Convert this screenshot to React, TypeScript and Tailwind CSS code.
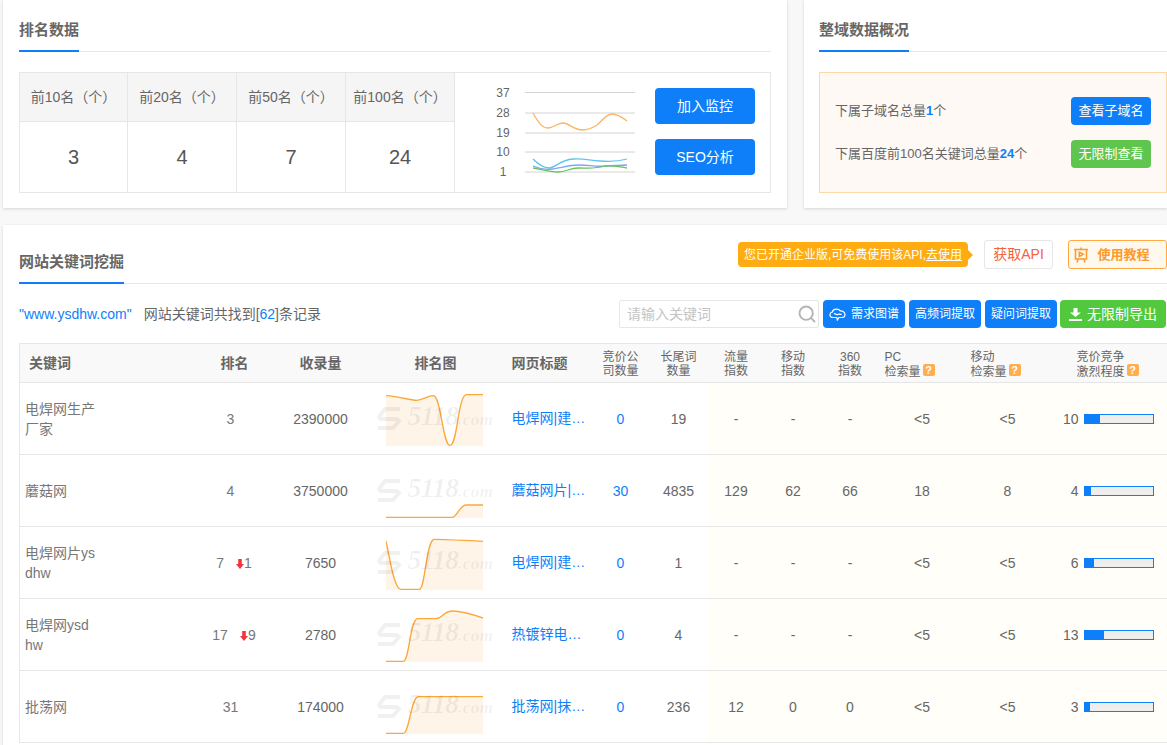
import { Search } from 'lucide-react';

const font = "font-['Liberation_Sans','Noto_Sans_CJK_SC',sans-serif]";

const rows = [
  {
    kw: '电焊网生产厂家',
    rank: '3',
    drop: '',
    count: '2390000',
    title: '电焊网|建…',
    bid: '0',
    tail: '19',
    flow: '-',
    mobile: '-',
    s360: '-',
    pc: '<5',
    mob: '<5',
    level: 10,
    fill: 15,
    line: 'M0 20 C40 22 70 34 92 34 C110 34 125 20 142 20 C165 20 170 169 192 169 C215 169 215 17 242 17 L291 17',
  },
  {
    kw: '蘑菇网',
    rank: '4',
    drop: '',
    count: '3750000',
    title: '蘑菇网片|…',
    bid: '30',
    tail: '4835',
    flow: '129',
    mobile: '62',
    s360: '66',
    pc: '18',
    mob: '8',
    level: 4,
    fill: 6,
    line: 'M0 169 L200 169 C215 165 222 132 240 132 L291 132',
  },
  {
    kw: '电焊网片ysdhw',
    rank: '7',
    drop: '1',
    count: '7650',
    title: '电焊网|建…',
    bid: '0',
    tail: '1',
    flow: '-',
    mobile: '-',
    s360: '-',
    pc: '<5',
    mob: '<5',
    level: 6,
    fill: 9,
    line: 'M0 24 C12 80 25 169 45 169 L100 169 C118 169 120 19 145 19 C180 19 240 23 291 25',
  },
  {
    kw: '电焊网ysdhw',
    rank: '17',
    drop: '9',
    count: '2780',
    title: '热镀锌电…',
    bid: '0',
    tail: '4',
    flow: '-',
    mobile: '-',
    s360: '-',
    pc: '<5',
    mob: '<5',
    level: 13,
    fill: 19,
    line: 'M0 169 L52 169 C70 169 72 41 95 41 L150 41 C170 41 172 18 200 18 C230 18 265 30 291 39',
  },
  {
    kw: '批荡网',
    rank: '31',
    drop: '',
    count: '174000',
    title: '批荡网|抹…',
    bid: '0',
    tail: '236',
    flow: '12',
    mobile: '0',
    s360: '0',
    pc: '<5',
    mob: '<5',
    level: 3,
    fill: 5,
    line: 'M0 169 L52 169 C70 169 75 59 97 59 L291 59',
  },
];

function Title({ children }: { children: string }) {
  return (
    <span className="-mb-px block border-b-2 border-[#0e7ff8] pb-[10px] text-[15px] leading-5 font-bold text-[#666]">
      {children}
    </span>
  );
}

function Badge() {
  return (
    <span className="ml-[2px] inline-block h-3 w-3 rounded-[2px] bg-[#ffad4f] text-center align-[2px] text-[11px] leading-3 font-bold text-white">
      ?
    </span>
  );
}

// ranking sparkline with the grey watermark over it
function RankChart({ line }: { line: string }) {
  return (
    <div className="relative mx-auto h-[60px] w-[126px]">
      <svg className="absolute top-0 left-[13px]" width="97" height="60" viewBox="0 0 291 180" fill="none">
        <path d={`${line} L291 171 L0 171 Z`} fill="#fef4e8" stroke="none" />
        <path d={line} stroke="#fda73a" strokeWidth="4" />
      </svg>
      <div className="absolute top-[17px] left-[4px] flex items-center text-[rgba(0,0,0,0.06)]">
        <svg width="25" height="25" viewBox="0 0 25 25" fill="none" stroke="currentColor" strokeWidth="4" strokeLinejoin="round">
          <path d="M23 3 H8 L2 11 L4 13 H20 L22 15 L16 22 H1" />
        </svg>
        <span className="-mt-[4px] ml-[6px] font-['Liberation_Serif',serif] text-[28px] leading-none font-bold tracking-[-1px] italic">5118</span>
        <span className="mt-[2px] font-['Liberation_Serif',serif] text-[17px] leading-none font-bold tracking-[0.5px] italic">.com</span>
      </div>
    </div>
  );
}

function Overview() {
  const ys = [92.5, 113, 133, 152, 172];
  const labels = ['37', '28', '19', '10', '1'];
  return (
    <svg width="160" height="100" viewBox="490 80 160 100" fill="none" className={`-mt-[5px] ${font}`}>
      {ys.map((y, i) => (
        <g key={y}>
          <line x1="525" x2="635" y1={y} y2={y} stroke="#d4d4d4" />
          <text x="503" y={y + 4} textAnchor="middle" fontSize="12" fill="#666" stroke="none">
            {labels[i]}
          </text>
        </g>
      ))}
      <path d="M533 113 C538 122 542 128 548 128 C553 128 558 123 563 123 C569 123 574 130 582 130 C590 130 594 127 597 125 C602 121 606 114 612 114 C618 114 623 118 627 121" stroke="#fdb462" strokeWidth="1.3" />
      <path d="M533 159 C538 164 543 168 549 168 C555 168 560 160 573 159 C585 158 590 161 600 161 C612 162 620 161 627 159" stroke="#5ec5ea" strokeWidth="1.3" />
      <path d="M533 166 C540 169 545 170 552 169 C560 168 570 165 578 165 C590 165 595 167 605 166 C615 165 620 166 627 165" stroke="#7ea6ee" strokeWidth="1.3" />
      <path d="M533 168 C540 169 550 172 558 172 C566 172 570 168 578 168 C590 168 595 169 605 166 C612 165 620 167 627 168" stroke="#68c45c" strokeWidth="1.3" />
    </svg>
  );
}

function ActionButton({ className, children }: { className: string; children: React.ReactNode }) {
  return (
    <button className={`flex h-7 items-center justify-center rounded-[4px] text-white ${className}`}>
      {children}
    </button>
  );
}

export default function App() {
  return (
    <div className={`h-[745px] w-[1167px] overflow-hidden bg-[#f8f8f8] pl-[3px] ${font}`}>
      <div className="flex gap-[17px]">
        {/* 排名数据 */}
        <section className="h-[208px] w-[784px] bg-white pr-4 pl-4 shadow-[0_1px_3px_rgba(0,0,0,0.14)]">
          <div className="flex border-b border-[#e6e6e6] pt-5">
            <Title>排名数据</Title>
          </div>
          <div className="mt-5 flex h-[121px] border border-[#e6e6e6]">
            {[
              ['前10名（个）', '3'],
              ['前20名（个）', '4'],
              ['前50名（个）', '7'],
              ['前100名（个）', '24'],
            ].map(([label, value]) => (
              <div key={label} className="flex w-[109px] flex-col border-r border-[#e6e6e6] first:w-[108px]">
                <div className="flex h-[49px] items-center justify-center border-b border-[#e6e6e6] bg-[#f5f5f5] text-[14px] whitespace-nowrap text-[#666]">
                  {label}
                </div>
                <div className="flex flex-1 items-center justify-center text-[20px] text-[#555]">{value}</div>
              </div>
            ))}
            <div className="flex flex-1 items-center pl-[35px]">
              <Overview />
              <div className="-mt-[2px] ml-[5px] flex flex-col gap-[15px]">
                <button className="h-9 w-[100px] rounded-[4px] bg-[#0e7ff8] text-[14px] text-white">加入监控</button>
                <button className="h-9 w-[100px] rounded-[4px] bg-[#0e7ff8] text-[14px] text-white">SEO分析</button>
              </div>
            </div>
          </div>
        </section>

        {/* 整域数据概况 */}
        <section className="h-[208px] flex-1 bg-white pl-[15px] shadow-[0_1px_3px_rgba(0,0,0,0.14)]">
          <div className="flex border-b border-[#e6e6e6] pt-5">
            <Title>整域数据概况</Title>
          </div>
          <div className="mt-5 flex h-[121px] flex-col justify-center gap-[15px] border border-[#fdd9a8] bg-[#fef9f5] pr-[15px] pl-[15px] text-[13px] text-[#666]">
            <div className="flex items-center justify-between">
              <span>
                下属子域名总量<b className="text-[#0e7ff8]">1</b>个
              </span>
              <ActionButton className="w-20 bg-[#0e7ff8] text-[13px]">查看子域名</ActionButton>
            </div>
            <div className="flex items-center justify-between">
              <span>
                下属百度前100名关键词总量<b className="text-[#0e7ff8]">24</b>个
              </span>
              <ActionButton className="w-20 bg-[#60c54f] text-[13px]">无限制查看</ActionButton>
            </div>
          </div>
        </section>
      </div>

      {/* 网站关键词挖掘 */}
      <section className="mt-[17px] bg-white pb-10 pl-4 shadow-[0_1px_3px_rgba(0,0,0,0.14)]">
        <div className="flex h-[59px] items-end justify-between border-b border-[#e6e6e6]">
          <Title>网站关键词挖掘</Title>
          <div className="mb-[14px] flex items-center">
            <div className="relative flex h-[25px] w-[230px] items-center justify-center rounded-[4px] bg-[#ffab12] text-[12px] whitespace-nowrap text-white">
              您已开通企业版,可免费使用该API,<span className="underline">去使用</span>
              <span className="absolute top-[8px] -right-[5px] h-0 w-0 border-y-[5px] border-l-[5px] border-y-transparent border-l-[#ffab12]" />
            </div>
            <button className="ml-4 h-[29px] w-[69px] rounded-[3px] border border-[#e6e6e6] bg-white text-[14px] text-[#f4623a]">
              获取API
            </button>
            <button className="ml-[15px] flex h-[29px] w-[99px] items-center justify-center gap-[8px] rounded-[3px] border border-[#ffa940] bg-[#fff8ec] pr-[12px] text-[13px] font-bold text-[#fc9a2c]">
              <svg width="16" height="16" viewBox="0 0 16 16" fill="none" stroke="currentColor" strokeWidth="1.5">
                <path d="M1 2.5 H15 M2.5 2.5 V12 H13.5 V2.5 M5 12 L4 15.5 M11 12 L12 15.5 M8 .5 V2.5" />
                <path d="M6.3 5.2 L10.2 7.3 L6.3 9.4 Z" />
              </svg>
              使用教程
            </button>
          </div>
        </div>

        <div className="mt-4 flex h-7 items-center justify-between pr-[1px]">
          <div className="text-[14px] text-[#666]">
            <span className="text-[#0e7ff8]">"www.ysdhw.com"</span>
            <span className="ml-3">
              网站关键词共找到[<span className="text-[#0e7ff8]">62</span>]条记录
            </span>
          </div>
          <div className="flex h-7 items-center">
            <div className="flex h-7 w-[200px] items-center justify-between rounded-[2px] border border-[#e6e6e6] pr-[1px] pl-[7px] text-[14px] text-[#c4c4c4]">
              请输入关键词
              <Search size={20} strokeWidth={2.3} className="text-[#b5b5b5]" />
            </div>
            <ActionButton className="ml-1 w-[82px] gap-[5px] bg-[#0e7ff8] text-[12px]">
              <svg width="17" height="13" viewBox="0 0 17 13" fill="none" stroke="currentColor" strokeWidth="1.2">
                <path d="M4 9.5 C1.8 9.5 .7 8 1 6.3 C1.3 4.8 2.3 4.3 3.2 4.2 C3.8 2.2 5.8 1 8 1.2 C9.5 1.3 10.6 2 11.2 2.9 C13.5 2.7 16 4.2 16 6.4 C16 8.6 14 9.5 12.5 9.5 H10 L8.3 12 L7.8 9.5 Z" />
                <path d="M5 6 C6.5 4.7 7.5 7.8 9 6.3 C10 5.3 11 7.2 12.5 6" />
              </svg>
              需求图谱
            </ActionButton>
            <ActionButton className="ml-1 w-[72px] bg-[#0e7ff8] text-[12px]">高频词提取</ActionButton>
            <ActionButton className="ml-1 w-[72px] bg-[#0e7ff8] text-[12px]">疑问词提取</ActionButton>
            <ActionButton className="ml-[3px] w-[106px] gap-[5px] bg-[#52c93d] text-[14px]">
              <svg width="13" height="14" viewBox="0 0 13 14" fill="currentColor">
                <path d="M4.5 1 H8.5 V5.5 H12 L6.5 10 L1 5.5 H4.5 Z" />
                <rect x="0" y="12" width="13" height="2" />
              </svg>
              无限制导出
            </ActionButton>
          </div>
        </div>

        <table className="mt-[15px] w-[1148px] table-fixed border-collapse border-l border-[#e6e6e6] text-[14px] text-[#666]">
          <colgroup>
            <col className="w-[171px]" />
            <col className="w-[80px]" />
            <col className="w-[100px]" />
            <col className="w-[130px]" />
            <col className="w-[91px]" />
            <col className="w-[58px]" />
            <col className="w-[58px]" />
            <col className="w-[57px]" />
            <col className="w-[57px]" />
            <col className="w-[57px]" />
            <col className="w-[85px]" />
            <col className="w-[86px]" />
            <col className="w-[118px]" />
          </colgroup>
          <thead>
            <tr className="h-[39px] border-y border-[#e6e6e6] bg-[#f9f9f9] text-[12px] leading-[14px] font-normal">
              <th className="pl-[9px] text-left text-[14px]">关键词</th>
              <th className="pl-2 text-[14px]">排名</th>
              <th className="text-[14px]">收录量</th>
              <th className="text-[14px]">排名图</th>
              <th className="pl-[11px] text-left text-[14px]">网页标题</th>
              <th className="pt-[2px] font-normal">
                竞价公
                <br />
                司数量
              </th>
              <th className="pt-[2px] font-normal">
                长尾词
                <br />
                数量
              </th>
              <th className="pt-[2px] font-normal">
                流量
                <br />
                指数
              </th>
              <th className="pt-[2px] font-normal">
                移动
                <br />
                指数
              </th>
              <th className="pt-[2px] font-normal">
                360
                <br />
                指数
              </th>
              <th className="pt-[2px] pl-[6px] text-left font-normal">
                PC
                <br />
                检索量
                <Badge />
              </th>
              <th className="pt-[2px] pl-[7px] text-left font-normal">
                移动
                <br />
                检索量
                <Badge />
              </th>
              <th className="pt-[2px] pl-[27px] text-left font-normal">
                竞价竞争
                <br />
                激烈程度
                <Badge />
              </th>
            </tr>
          </thead>
          <tbody>
            {rows.map((r) => (
              <tr key={r.kw} className="h-[72px] border-b border-[#e6e6e6]">
                <td className="pl-[5px]">
                  <div className="w-[71px] leading-5 break-all text-[#777]">{r.kw}</div>
                </td>
                <td className="pt-[2px] text-center text-[#777]">
                  {r.drop ? (
                    <div className="flex items-center justify-center pl-[7px]">
                      <span>{r.rank}</span>
                      <svg className="ml-3 text-[#f5333f]" width="8" height="10" viewBox="0 0 8 10" fill="currentColor">
                        <path d="M2.2 0 H5.8 V5 H8 L4 10 L0 5 H2.2 Z" />
                      </svg>
                      <span>{r.drop}</span>
                    </div>
                  ) : (
                    r.rank
                  )}
                </td>
                <td className="pt-[2px] text-center">{r.count}</td>
                <td>
                  <RankChart line={r.line} />
                </td>
                <td className="pl-[11px] whitespace-nowrap text-[#0e7ff8]">{r.title}</td>
                <td className="pt-[2px] text-center text-[#0e7ff8]">{r.bid}</td>
                <td className="pt-[2px] text-center">{r.tail}</td>
                <td className="bg-[#fffef8] pt-[2px] text-center">{r.flow}</td>
                <td className="bg-[#fffef8] pt-[2px] text-center">{r.mobile}</td>
                <td className="bg-[#fffef8] pt-[2px] text-center">{r.s360}</td>
                <td className="bg-[#fffef8] pt-[2px] pl-[2px] text-center">{r.pc}</td>
                <td className="bg-[#fffef8] pt-[2px] pl-[2px] text-center">{r.mob}</td>
                <td className="bg-[#fffef8]">
                  <div className="flex items-center justify-end pr-[14px]">
                    <span className="mt-[2px] mr-[5px]">{r.level}</span>
                    <div className="h-[10px] w-[70px] border border-[#0e7ff8] bg-[#eeeeee]">
                      <div className="h-full bg-[#0e7ff8]" style={{ width: r.fill }} />
                    </div>
                  </div>
                </td>
              </tr>
            ))}
          </tbody>
        </table>
      </section>
    </div>
  );
}
